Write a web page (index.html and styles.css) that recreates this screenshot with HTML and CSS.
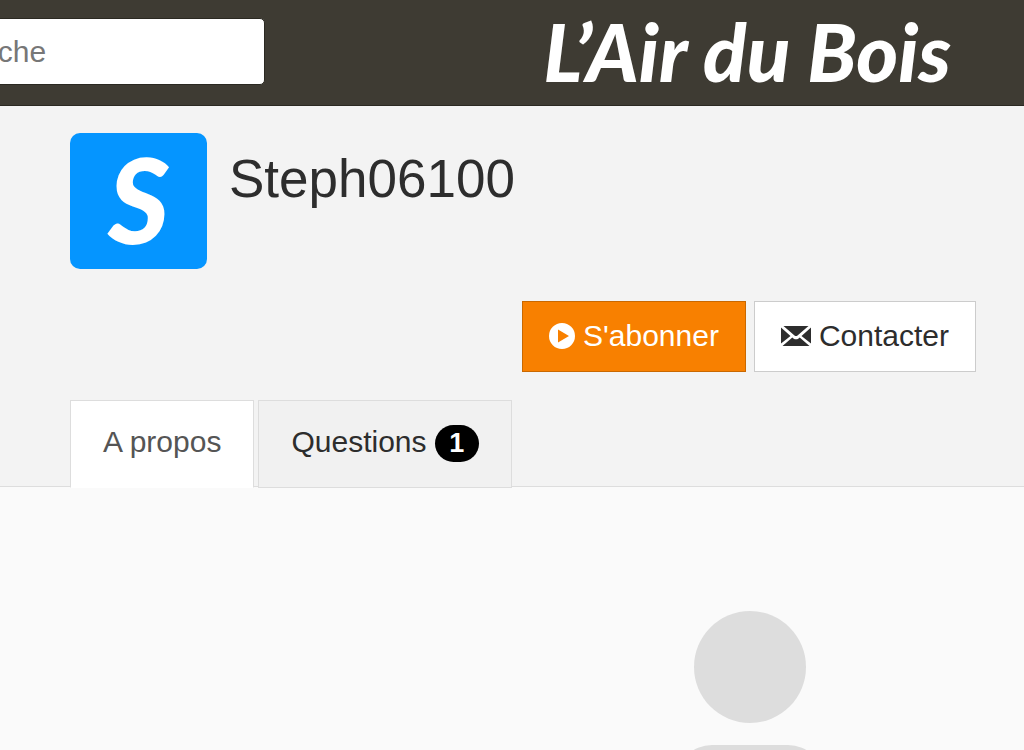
FILE: index.html
```
<!DOCTYPE html>
<html lang="fr">
<head>
  <meta charset="UTF-8" />
  <meta name="viewport" content="width=device-width, initial-scale=1" />
  <title>Steph06100 - L'Air du Bois</title>
  <link rel="stylesheet" href="styles.css">
</head>
<body>
  <header class="navbar">
    <form class="search">
      <input class="search-input" type="text" placeholder="Recherche" aria-label="Recherche" />
    </form>
    <a class="brand" href="#">L’Air du Bois</a>
  </header>

  <section class="profile">
    <div class="profile-head">
      <div class="avatar" aria-hidden="true">S</div>
      <h1 class="username">Steph06100</h1>
    </div>

    <div class="actions">
      <button type="button" class="btn btn-primary">
        <svg class="icon-play" viewBox="0 0 26 26" aria-hidden="true">
          <path fill="currentColor" fill-rule="evenodd" d="M13 0a13 13 0 1 0 0 26a13 13 0 1 0 0-26zM9 6.5v13l11-6.5z" />
        </svg>
        <span>S'abonner</span>
      </button>
      <button type="button" class="btn btn-default">
        <svg class="icon-mail" viewBox="0 0 30 22" aria-hidden="true">
          <path fill="currentColor" d="M2.500 1h25L16.500 10.500q-1.500 1-3 0zM0 2.500L9.500 11L0 18.500zM30 2.500L20.500 11L30 18.500zM11.300 12.500l1.500 1.200q2.200 1.300 4.400 0l1.500-1.200L28.500 21h-27z" />
        </svg>
        <span>Contacter</span>
      </button>
    </div>

    <nav class="tabs">
      <a class="tab active" href="#">A propos</a>
      <a class="tab" href="#">Questions <span class="badge">1</span></a>
    </nav>
  </section>

  <main class="content">
    <svg class="placeholder" viewBox="0 0 148 240" aria-hidden="true">
      <circle cx="74" cy="56" r="56" />
      <rect x="0" y="134" width="148" height="106" rx="36" />
    </svg>
  </main>
</body>
</html>
```

FILE: styles.css
```
* {
  box-sizing: border-box;
}

html, body {
  height: 100%;
}

body {
  margin: 0;
  display: flex;
  flex-direction: column;
  overflow: hidden;
  font-family: "Liberation Sans", Arial, sans-serif;
  font-size: 30px;
  line-height: 42px;
  color: #2d2d2d;
  background: #fafafa;
}

a {
  color: inherit;
  text-decoration: none;
}

/* Top bar */
.navbar {
  display: flex;
  justify-content: space-between;
  align-items: flex-start;
  padding: 18px 73px 20px 0;
  background: #3e3b33;
  border-bottom: 1px solid #2b2922;
}

.search {
  margin-left: -126px;
}

.search-input {
  display: block;
  width: 391px;
  height: 67px;
  padding: 0 26px;
  font: inherit;
  color: #555;
  background: #fff;
  border: 1px solid #2b2922;
  border-radius: 5px;
}

.search-input::placeholder {
  color: #777;
  opacity: 1;
}

.brand {
  font-family: Lato, "Liberation Sans", sans-serif;
  font-size: 80px;
  font-weight: 900;
  font-style: italic;
  line-height: 67px;
  color: #fff;
  white-space: nowrap;
}

/* Profile header */
.profile {
  padding: 27px 48px 0 70px;
  background: #f3f3f3;
  border-bottom: 1px solid #ddd;
}

.profile-head {
  display: flex;
  gap: 22px;
}

.avatar {
  width: 137px;
  height: 136px;
  border-radius: 10px;
  background: #0595ff;
  color: #fff;
  font-family: Lato, "Liberation Sans", sans-serif;
  font-size: 118px;
  font-weight: 900;
  font-style: italic;
  line-height: 132px;
  text-align: center;
}

.username {
  margin: 16px 0 0;
  font-size: 53px;
  font-weight: 400;
  line-height: 60px;
}

.actions {
  display: flex;
  justify-content: flex-end;
  gap: 8px;
  margin-top: 32px;
}

.btn {
  display: flex;
  align-items: center;
  gap: 8px;
  height: 71px;
  padding: 0 26px 2px;
  font: inherit;
  cursor: pointer;
}

.btn-primary {
  color: #fff;
  background: #f88000;
  border: 1px solid #c96800;
}

.btn-default {
  color: #2d2d2d;
  background: #fff;
  border: 1px solid #ccc;
}

.icon-play {
  width: 26px;
  height: 26px;
}

.icon-mail {
  width: 30px;
  height: 22px;
}

.tabs {
  display: flex;
  gap: 4px;
  margin-top: 28px;
  margin-bottom: -2px;
}

.tab {
  height: 88px;
  padding: 20px 32px;
  background: #f1f1f1;
  border: 1px solid #ddd;
}

.tab.active {
  color: #555;
  background: #fff;
  border-bottom-color: transparent;
}

.badge {
  display: inline-block;
  min-width: 44px;
  padding: 0 14px;
  border-radius: 19px;
  background: #000;
  color: #fff;
  font-size: 27px;
  font-weight: 700;
  line-height: 37px;
  text-align: center;
}

/* Content */
.content {
  flex: 1;
  min-height: 0;
  padding: 124px 200px 0;
  overflow: hidden;
}

.placeholder {
  display: block;
  width: 148px;
  height: 240px;
  margin-left: auto;
  fill: #ddd;
}
```
